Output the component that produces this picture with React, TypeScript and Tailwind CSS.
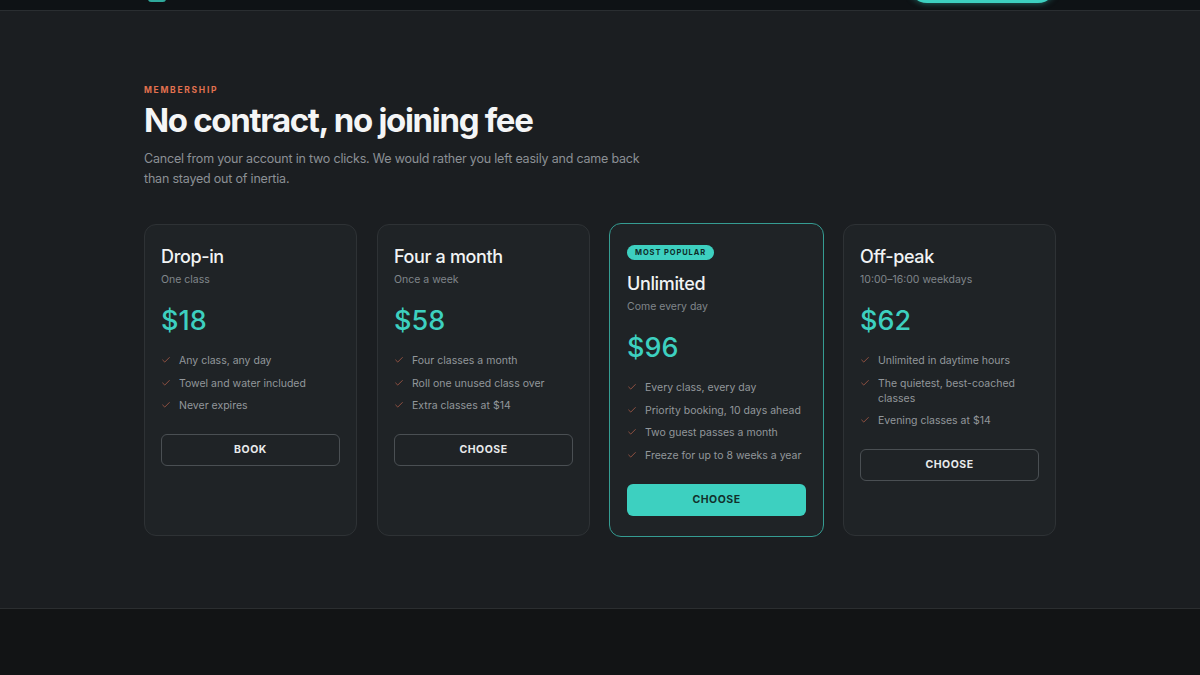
import { Check } from 'lucide-react';

type Plan = {
  name: string;
  sub: string;
  price: string;
  features: string[];
  cta: string;
  featured?: boolean;
};

const plans: Plan[] = [
  {
    name: 'Drop-in',
    sub: 'One class',
    price: '$18',
    features: ['Any class, any day', 'Towel and water included', 'Never expires'],
    cta: 'BOOK',
  },
  {
    name: 'Four a month',
    sub: 'Once a week',
    price: '$58',
    features: ['Four classes a month', 'Roll one unused class over', 'Extra classes at $14'],
    cta: 'CHOOSE',
  },
  {
    name: 'Unlimited',
    sub: 'Come every day',
    price: '$96',
    features: [
      'Every class, every day',
      'Priority booking, 10 days ahead',
      'Two guest passes a month',
      'Freeze for up to 8 weeks a year',
    ],
    cta: 'CHOOSE',
    featured: true,
  },
  {
    name: 'Off-peak',
    sub: '10:00–16:00 weekdays',
    price: '$62',
    features: ['Unlimited in daytime hours', 'The quietest, best-coached classes', 'Evening classes at $14'],
    cta: 'CHOOSE',
  },
];

function PlanCard({ plan }: { plan: Plan }) {
  return (
    <div
      className={
        plan.featured
          ? '-m-px flex flex-col rounded-xl border border-[#359c92] bg-[#1f2326] px-[17px] pt-[21px] pb-5'
          : 'flex flex-col rounded-xl border border-[#2e3235] bg-[#1f2326] px-4 pt-[19px] pb-5'
      }
    >
      {plan.featured && (
        <span className="mb-[11px] flex h-[15px] w-fit items-center rounded-full bg-[#3dd0c0] px-[8px] text-[7.5px] font-bold tracking-[0.12em] text-[#0f2b28]">
          MOST POPULAR
        </span>
      )}
      <h3 className="text-[18px] leading-[26px] font-medium tracking-[-0.02em] text-[#f1f3f4]">{plan.name}</h3>
      <p className="mt-[2px] text-[10.5px] leading-4 text-[#80868b]">{plan.sub}</p>
      <div className="mt-[17px] text-[27px] leading-8 font-medium text-[#3dd0c0]">{plan.price}</div>
      <ul className="mt-4 flex flex-col gap-[7.5px]">
        {plan.features.map(f => (
          <li key={f} className="flex items-start gap-[8px] text-[10.5px] leading-[15px] text-[#92979b]">
            <Check className="mt-[2px] h-[10px] w-[10px] shrink-0 text-[#b8614b]" strokeWidth={1.75} />
            <span>{f}</span>
          </li>
        ))}
      </ul>
      <button
        className={
          plan.featured
            ? 'mt-[21px] h-8 w-full rounded-md bg-[#3dd0c0] text-[10.5px] font-bold tracking-[0.05em] text-[#12302c]'
            : 'mt-[21px] h-8 w-full rounded-md border border-[#4a4f53] text-[10.5px] font-bold tracking-[0.05em] text-[#e8eaeb]'
        }
      >
        {plan.cta}
      </button>
    </div>
  );
}

export default function App() {
  return (
    <div className="flex min-h-[675px] flex-col bg-[#121415] font-['Inter','Noto_Sans',sans-serif]">
      <header className="h-[11px] overflow-hidden border-b border-[#2a2e31] bg-[#0e1215]">
        <div className="mx-auto flex w-[912px] items-start justify-between">
          <div className="-mt-[18px] ml-[4px] h-[20px] w-[18px] rounded-[3px] border-2 border-[#2fa89b]" />
          <div className="-mt-[33px] h-[36px] w-[147px] rounded-full bg-[#3dd0c0] shadow-[0_0_6px_rgba(61,208,192,0.5)]" />
        </div>
      </header>

      <section className="border-b border-[#2b2e30] bg-[#1b1e21] pt-[73px] pb-[72px]">
        <div className="mx-auto w-[912px]">
          <p className="text-[8.5px] leading-[12px] font-bold tracking-[0.2em] text-[#e2714f]">MEMBERSHIP</p>
          <h2 className="mt-[6px] text-[33px] leading-[36px] font-bold tracking-[-0.04em] text-[#f4f5f6]">
            No contract, no joining fee
          </h2>
          <p className="mt-[11px] w-[510px] text-[12.5px] leading-5 tracking-[-0.2px] text-[#8b9095]">
            Cancel from your account in two clicks. We would rather you left easily and came back than stayed out of
            inertia.
          </p>
          <div className="mt-[35px] grid grid-cols-4 gap-5">
            {plans.map(p => (
              <PlanCard key={p.name} plan={p} />
            ))}
          </div>
        </div>
      </section>

      <footer className="flex-1 bg-[#121415]" />
    </div>
  );
}
